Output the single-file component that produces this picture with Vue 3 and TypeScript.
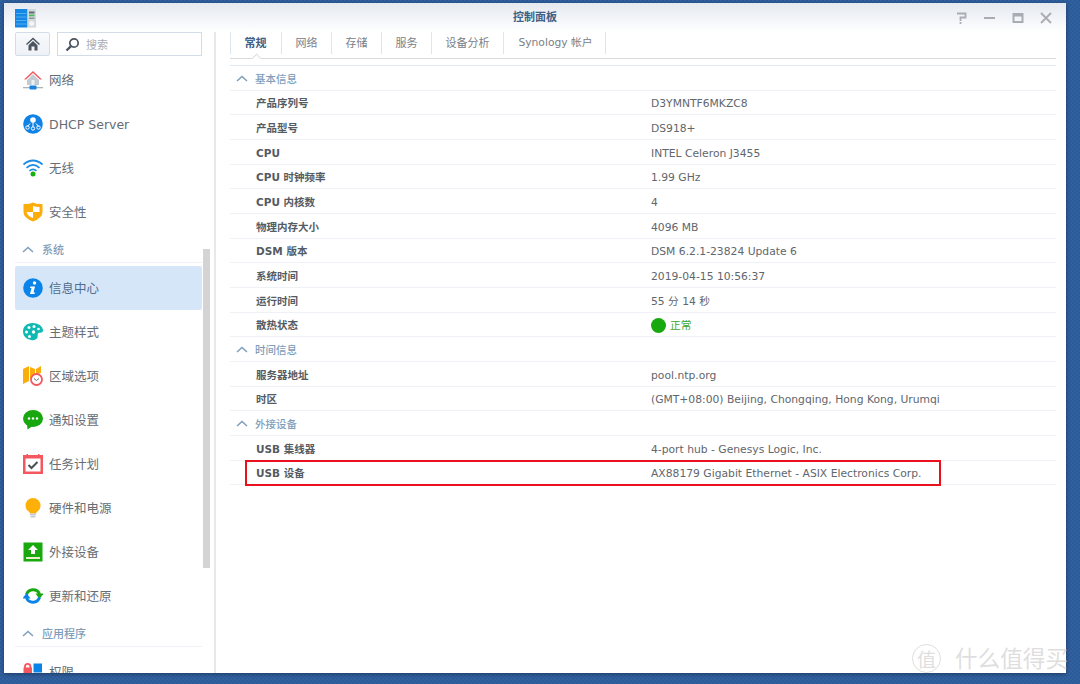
<script setup lang="ts">
interface NavItem {
  icon: string
  label: string
  active?: boolean
}

interface InfoRow {
  label: string
  value: string
  status?: boolean
  marked?: boolean
}

const navTop: NavItem[] = [
  { icon: 'network', label: '网络' },
  { icon: 'dhcp', label: 'DHCP Server' },
  { icon: 'wifi', label: '无线' },
  { icon: 'shield', label: '安全性' },
]

const navSystem: NavItem[] = [
  { icon: 'info', label: '信息中心', active: true },
  { icon: 'theme', label: '主题样式' },
  { icon: 'region', label: '区域选项' },
  { icon: 'notify', label: '通知设置' },
  { icon: 'task', label: '任务计划' },
  { icon: 'bulb', label: '硬件和电源' },
  { icon: 'external', label: '外接设备' },
  { icon: 'update', label: '更新和还原' },
]

const navApps: NavItem[] = [{ icon: 'privilege', label: '权限' }]

const navGroups = [
  { title: '', items: navTop },
  { title: '系统', items: navSystem },
  { title: '应用程序', items: navApps },
]

const tabs = ['常规', '网络', '存储', '服务', '设备分析', 'Synology 帐户']

const sections: { title: string; rows: InfoRow[] }[] = [
  {
    title: '基本信息',
    rows: [
      { label: '产品序列号', value: 'D3YMNTF6MKZC8' },
      { label: '产品型号', value: 'DS918+' },
      { label: 'CPU', value: 'INTEL Celeron J3455' },
      { label: 'CPU 时钟频率', value: '1.99 GHz' },
      { label: 'CPU 内核数', value: '4' },
      { label: '物理内存大小', value: '4096 MB' },
      { label: 'DSM 版本', value: 'DSM 6.2.1-23824 Update 6' },
      { label: '系统时间', value: '2019-04-15 10:56:37' },
      { label: '运行时间', value: '55 分 14 秒' },
      { label: '散热状态', value: '正常', status: true },
    ],
  },
  {
    title: '时间信息',
    rows: [
      { label: '服务器地址', value: 'pool.ntp.org' },
      { label: '时区', value: '(GMT+08:00) Beijing, Chongqing, Hong Kong, Urumqi' },
    ],
  },
  {
    title: '外接设备',
    rows: [
      { label: 'USB 集线器', value: '4-port hub - Genesys Logic, Inc.' },
      { label: 'USB 设备', value: 'AX88179 Gigabit Ethernet - ASIX Electronics Corp.', marked: true },
    ],
  },
]
</script>

<template>
  <div class="desktop">
    <div class="window">
      <header class="titlebar">
        <svg class="logo" width="22" height="19" viewBox="0 0 22 19">
          <rect x="0" y="0" width="12.5" height="18.5" fill="#1488e4" />
          <path d="M1 4.5h10.5M1 8h10.5M1 11.5h10.5M1 15h10.5" stroke="#6dbcf3" stroke-width="0.7" />
          <rect x="12.5" y="0" width="8.5" height="18.5" fill="#d3d8db" />
          <rect x="14" y="2.5" width="5.5" height="2" fill="#5f6b74" />
          <rect x="14" y="5.5" width="5.5" height="1.8" fill="#4cbb5a" />
          <rect x="14" y="8.5" width="5.5" height="1.5" fill="#8b959c" />
          <circle cx="16.7" cy="14.5" r="2.5" fill="#f2f4f5" />
        </svg>
        <span class="title">控制面板</span>
        <div class="win-buttons">
          <svg width="14" height="14" viewBox="0 0 14 14" fill="none" stroke="#a9adb3" stroke-width="1.8">
            <path d="M2 2.5h8.5v4h-5v3.5" />
            <path d="M5.5 11v2" />
          </svg>
          <svg width="14" height="14" viewBox="0 0 14 14"><rect x="1" y="6" width="11" height="2" fill="#a9adb3" /></svg>
          <svg width="14" height="14" viewBox="0 0 14 14"><path d="M1.5 2h11v10h-11zM3.5 5.5v4.5h7v-4.5z" fill="#a9adb3" fill-rule="evenodd" /></svg>
          <svg width="14" height="14" viewBox="0 0 14 14" fill="none" stroke="#a9adb3" stroke-width="1.8"><path d="M2 2l10 10M12 2l-10 10" /></svg>
        </div>
      </header>

      <div class="body">
        <aside class="sidebar">
          <div class="search-row">
            <button class="home-btn">
              <svg width="14" height="14" viewBox="0 0 14 14">
                <path d="M7 0.5L0 7l1 1 6-5.500L13 8l1-1zM2.5 8.2L7 4l4.5 4.200V13.500H8.500V9.500h-3v4H2.500z" fill="#4a5560" />
              </svg>
            </button>
            <div class="search-box">
              <svg width="15" height="15" viewBox="0 0 15 15" fill="none" stroke="#4a5560">
                <circle cx="9" cy="6" r="4.2" stroke-width="1.7" />
                <path d="M6 9.2L1.5 13.5" stroke-width="2.4" />
              </svg>
              <span>搜索</span>
            </div>
          </div>

          <template v-for="group in navGroups" :key="group.title">
            <div v-if="group.title" class="nav-section">
              <svg width="12" height="7" viewBox="0 0 12 7" fill="none" stroke="#7e9fbd" stroke-width="1.5"><path d="M1 6l5-4.500L11 6" /></svg>
              <span>{{ group.title }}</span>
            </div>
            <div v-for="item in group.items" :key="item.label" class="nav-item" :class="{ active: item.active }">
              <svg class="nav-icon" width="20" height="20" viewBox="0 0 20 20">
                <template v-if="item.icon === 'network'">
                  <path d="M10 1L1 9.5h2L10 3l7 6.500h2z" fill="#f4575e" />
                  <path d="M4 10l6-5.800 6 5.800v5H4z" fill="#c3ccd3" />
                  <rect x="8.5" y="10" width="3" height="5" fill="#eef1f3" />
                  <rect x="0" y="17" width="20" height="1.3" fill="#aab4bd" />
                  <rect x="6.5" y="15.5" width="7" height="4" rx="0.8" fill="#1b82e0" />
                </template>
                <template v-else-if="item.icon === 'dhcp'">
                  <circle cx="10" cy="10" r="9.8" fill="#0f82e6" />
                  <circle cx="10" cy="6" r="2.8" fill="#fff" />
                  <path d="M10 8v5M7 9.5l-2.500 3M13 9.500l2.500 3" stroke="#fff" stroke-width="1" />
                  <g fill="none" stroke="#fff" stroke-width="1">
                    <circle cx="4.5" cy="13.5" r="1.7" />
                    <circle cx="10" cy="14.5" r="1.7" />
                    <circle cx="15.5" cy="13.5" r="1.7" />
                  </g>
                </template>
                <template v-else-if="item.icon === 'wifi'">
                  <g fill="none" stroke="#1b8be6" stroke-width="1.7">
                    <path d="M0.5 6.5Q10 -1.5 19.5 6.5" />
                    <path d="M3.5 9.8Q10 4 16.5 9.8" />
                    <path d="M6.5 12.8Q10 9.8 13.5 12.8" />
                  </g>
                  <circle cx="10" cy="16" r="2.5" fill="#18b00f" />
                </template>
                <template v-else-if="item.icon === 'shield'">
                  <path d="M0.5 2Q6 2.5 10 0.5Q14 2.5 19.5 2V10Q19.5 16 10 19.5Q0.5 16 0.5 10z" fill="#fbae0b" />
                  <path d="M10 4Q13 5 16.5 5V10H10zM10 10V16Q5 14.5 3.5 10z" fill="#fff" />
                </template>
                <template v-else-if="item.icon === 'info'">
                  <circle cx="10" cy="10" r="9.8" fill="#0a84e8" />
                  <circle cx="11.5" cy="5" r="1.7" fill="#fff" />
                  <path d="M7.5 8.5h4.500L10.500 14.500h1.500l-0.500 1.500H7l1.500-6H7z" fill="#fff" />
                </template>
                <template v-else-if="item.icon === 'theme'">
                  <path d="M9.5 1C15 1 20 4 20 8.5c0 2.500-3 2-4.500 2.500-1.500 1-0.500 3-1 4.500-1 2.500-4 3-6.500 2.500C3 17 0 14 0 9.500 0 4.500 4 1 9.500 1z" fill="#0fbab5" />
                  <g fill="#fff">
                    <circle cx="6" cy="5.5" r="1.5" />
                    <circle cx="11" cy="4.5" r="1.5" />
                    <circle cx="15.5" cy="7" r="1.3" />
                    <circle cx="3.5" cy="10" r="1.5" />
                    <circle cx="6.5" cy="14.5" r="1.5" />
                    <circle cx="10.5" cy="10" r="1.7" />
                  </g>
                </template>
                <template v-else-if="item.icon === 'region'">
                  <path d="M0 3l6-3v15l-6 3zM7 1l5 2v5.500l-2 .5-3 4.500zM13 3l5-3v7l-5 1.500z" fill="#fbae0b" />
                  <circle cx="13.5" cy="13.5" r="5.5" fill="#fff" stroke="#f4575e" stroke-width="1.8" />
                  <path d="M11 12.5l2.500 2 2.500-2" fill="none" stroke="#6a6f74" stroke-width="1" />
                </template>
                <template v-else-if="item.icon === 'notify'">
                  <ellipse cx="10" cy="8.5" rx="10" ry="8.5" fill="#18a70f" />
                  <path d="M4 14l0.500 5.500 6-4z" fill="#18a70f" />
                  <g fill="#fff">
                    <circle cx="6" cy="8.5" r="1.2" />
                    <circle cx="10" cy="8.5" r="1.2" />
                    <circle cx="14" cy="8.5" r="1.2" />
                  </g>
                </template>
                <template v-else-if="item.icon === 'task'">
                  <rect x="0" y="1" width="20" height="19" fill="#f4575e" />
                  <rect x="2.5" y="4.5" width="15" height="13" fill="#fff" />
                  <rect x="3.5" y="0" width="1.5" height="3" fill="#f4575e" />
                  <rect x="15" y="0" width="1.5" height="3" fill="#f4575e" />
                  <path d="M5.5 11l3 3 6-6" fill="none" stroke="#4a5056" stroke-width="2" />
                </template>
                <template v-else-if="item.icon === 'bulb'">
                  <circle cx="10" cy="7.5" r="7.5" fill="#fdb008" />
                  <path d="M6 13h8l-1 2.500H7z" fill="#fdb008" />
                  <rect x="7" y="15.5" width="6" height="1.5" fill="#c6cacd" />
                  <rect x="7.5" y="17.5" width="5" height="2" fill="#c6cacd" />
                </template>
                <template v-else-if="item.icon === 'external'">
                  <rect x="0.5" y="0.5" width="19" height="19" fill="#17a90d" />
                  <path d="M10 3l5 5h-3v4H8V8H5z" fill="#fff" />
                  <rect x="3" y="15" width="14" height="2" fill="#e8f1cc" />
                </template>
                <template v-else-if="item.icon === 'update'">
                  <path d="M3.5 8.5A7 7 0 0 1 16.5 8" fill="none" stroke="#18a70f" stroke-width="3" />
                  <path d="M12.5 7.5h8l-4 5.500z" fill="#18a70f" />
                  <path d="M16.5 11.5A7 7 0 0 1 3.5 12" fill="none" stroke="#0a84e8" stroke-width="3" />
                  <path d="M-0.5 12.5h8l-4-5.500z" fill="#0a84e8" />
                </template>
                <template v-else-if="item.icon === 'privilege'">
                  <path d="M2 9V4.500a2.700 2.700 0 0 1 5.400 0V9" fill="none" stroke="#f4575e" stroke-width="1.8" />
                  <rect x="0.5" y="5.5" width="8.5" height="9" fill="#f4575e" />
                  <rect x="10.5" y="1.5" width="8.5" height="9" fill="#0a84e8" />
                </template>
              </svg>
              <span class="nav-label" :class="{ latin: item.icon === 'dhcp' }">{{ item.label }}</span>
            </div>
          </template>

          <div class="scrollbar"></div>
        </aside>

        <main class="content">
          <nav class="tabs">
            <div v-for="(tab, i) in tabs" :key="tab" class="tab" :class="{ current: i === 0 }">{{ tab }}</div>
          </nav>
          <div class="tab-rule"></div>

          <section v-for="section in sections" :key="section.title">
            <div class="section-head">
              <svg width="12" height="7" viewBox="0 0 12 7" fill="none" stroke="#7e9fbd" stroke-width="1.5"><path d="M1 6l5-4.500L11 6" /></svg>
              <span>{{ section.title }}</span>
            </div>
            <div v-for="row in section.rows" :key="row.label" class="row">
              <span class="row-label">{{ row.label }}</span>
              <span class="row-value" :class="{ ok: row.status }">
                <i v-if="row.status" class="dot"></i>{{ row.value }}
              </span>
              <div v-if="row.marked" class="mark"></div>
            </div>
          </section>
        </main>
      </div>
    </div>

    <div class="watermark">
      <span class="wm-circle">值</span>
      <span class="wm-text">什么值得买</span>
    </div>
  </div>
</template>

<style>
html,
body {
  margin: 0;
  height: 100%;
}
</style>

<style scoped>
.desktop {
  position: relative;
  box-sizing: border-box;
  width: 1080px;
  height: 684px;
  padding: 3px 14px 11px 4px;
  overflow: hidden;
  background: repeating-conic-gradient(#2c5b98 0 25%, #32619f 0 50%) 0 0 / 4px 4px;
  font-family: "DejaVu Sans", "Noto Sans CJK SC", sans-serif;
}

.window {
  display: flex;
  flex-direction: column;
  height: 100%;
  background: #fff;
  box-shadow: 0 1px 4px rgba(0, 0, 0, 0.4);
  overflow: hidden;
}

.titlebar {
  display: flex;
  flex: none;
  align-items: center;
  position: relative;
  height: 29px;
  padding: 0 11px;
  background: linear-gradient(#e4e9f0, #ffffff);
}

.logo {
  margin-top: 2px;
}

.title {
  position: absolute;
  left: 509px;
  top: 7px;
  font-size: 11px;
  line-height: 15px;
  font-weight: 700;
  color: #3f6186;
}

.win-buttons {
  display: flex;
  gap: 14px;
  margin-left: auto;
  margin-right: 2px;
}

.body {
  display: flex;
  flex: 1;
  min-height: 0;
}

.sidebar {
  position: relative;
  flex: none;
  box-sizing: border-box;
  width: 212px;
  height: 100%;
  padding-left: 11px;
  border-right: 2px solid #e6e8eb;
  overflow: hidden;
}

.search-row {
  display: flex;
  gap: 7px;
  width: 187px;
  height: 24px;
  margin-bottom: 2px;
}

.home-btn {
  display: flex;
  align-items: center;
  justify-content: center;
  box-sizing: border-box;
  width: 35px;
  height: 24px;
  padding: 0;
  border: 1px solid #d3dde8;
  border-radius: 2px;
  background: linear-gradient(#f8fafc, #edf1f6);
}

.search-box {
  display: flex;
  flex: 1;
  align-items: center;
  gap: 6px;
  box-sizing: border-box;
  padding-left: 7px;
  border: 1px solid #d3dde8;
  font-size: 11px;
  color: #a9aeb4;
}

.nav-section {
  display: flex;
  align-items: center;
  gap: 8px;
  box-sizing: border-box;
  width: 187px;
  height: 29px;
  margin-bottom: 3px;
  padding: 2px 0 0 7px;
  border-bottom: 1px solid #eef2f7;
  font-size: 11px;
  color: #7f9db9;
  font-weight: 500;
}

.nav-item {
  display: flex;
  flex: none;
  align-items: center;
  gap: 6px;
  box-sizing: border-box;
  width: 187px;
  height: 44px;
  padding-left: 8px;
  border-radius: 2px;
  font-size: 12.5px;
  color: #666d75;
}

.nav-item.active {
  background: #d6e6f9;
  color: #4e6d8f;
}

.nav-icon {
  flex: none;
}

.nav-label {
  margin-bottom: 2px;
}

.nav-label.latin {
  margin-bottom: 0;
}

.scrollbar {
  position: absolute;
  left: 199px;
  top: 217px;
  width: 7px;
  height: 319px;
  background: #d4d4d4;
}

.content {
  flex: 1;
  min-width: 0;
  padding: 0 10px 0 14px;
}

.tabs {
  display: flex;
  height: 22px;
  border-left: 1px solid #dde5ed;
}

.tab {
  position: relative;
  display: flex;
  align-items: center;
  justify-content: center;
  box-sizing: border-box;
  width: 50px;
  padding-bottom: 3px;
  border-right: 1px solid #dde5ed;
  font-size: 11px;
  color: #7a8087;
}

.tab:nth-child(1) {
  width: 51px;
  padding-right: 1px;
}

.tab:nth-child(5) {
  width: 72px;
}

.tab:nth-child(6) {
  width: 102px;
  padding-left: 2px;
  font-size: 10.75px;
}

.tab.current {
  color: #3f6186;
  font-weight: 700;
}

.tab.current::after {
  content: "";
  position: absolute;
  left: 22px;
  top: 23px;
  width: 6px;
  height: 6px;
  background: #fff;
  border-left: 1px solid #dcdfe2;
  border-top: 1px solid #dcdfe2;
  transform: rotate(45deg);
}

.tab-rule {
  height: 6px;
  margin-top: 4px;
  border-top: 1px solid #d8dadd;
  border-bottom: 1px solid #dfe8f1;
}

.section-head {
  display: flex;
  align-items: center;
  gap: 7px;
  box-sizing: border-box;
  height: 24.66px;
  padding: 1px 0 0 6px;
  border-bottom: 1px solid #eef1f6;
  font-size: 10.5px;
  color: #7f9db9;
  font-weight: 500;
}

.row {
  position: relative;
  display: flex;
  align-items: center;
  box-sizing: border-box;
  height: 24.66px;
  padding-top: 2px;
  border-bottom: 1px solid #eef1f6;
  font-size: 10.5px;
  line-height: 14px;
}

.row-label {
  flex: none;
  width: 421px;
  padding-left: 26px;
  box-sizing: border-box;
  font-weight: 700;
  color: #555b62;
}

.row-value {
  display: flex;
  align-items: center;
  margin-top: 2px;
  font-size: 10.75px;
  color: #5f666d;
}

.row-value.ok {
  color: #3da52e;
}

.dot {
  width: 15px;
  height: 15px;
  margin: -2px 4px 0 0;
  border-radius: 50%;
  background: #17a90d;
}

.mark {
  position: absolute;
  left: 15px;
  top: -1px;
  width: 696px;
  height: 26px;
  box-sizing: border-box;
  border: 2px solid #e8111c;
}

.watermark {
  position: absolute;
  right: 12px;
  bottom: 11px;
  display: flex;
  align-items: center;
  gap: 14px;
  color: rgba(214, 214, 214, 0.8);
}

.wm-circle {
  display: flex;
  align-items: center;
  justify-content: center;
  box-sizing: border-box;
  width: 29px;
  height: 29px;
  border: 1.5px solid rgba(214, 214, 214, 0.8);
  border-radius: 50%;
  font-size: 19px;
}

.wm-text {
  font-size: 22.6px;
  line-height: 26px;
}
</style>
